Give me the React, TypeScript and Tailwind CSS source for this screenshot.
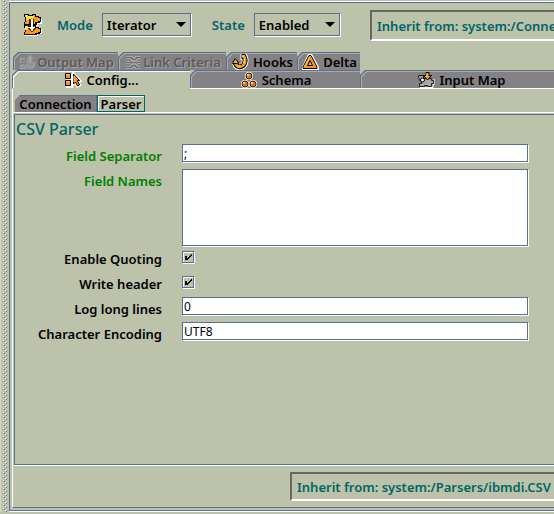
import React, { useState } from 'react';

type IconProps = { className?: string };

function ModeIcon() {
  return (
    <svg width="18" height="22" viewBox="0 0 18 22" shapeRendering="crispEdges" aria-hidden="true">
      <path d="M1 1h11v2h4v2h2v5h-4v2H1zM1 11h11v2h4v2h2v5h-4v2H1z" fill="#fff" />
      <path d="M0 0h5v1h3V0h4v2h3v1h2v5h-1v1h-3v2H0V8h1V3H0z" fill="#000" />
      <path d="M0 11h5v1h3v-1h4v2h3v1h2v5h-1v1h-3v1H0v-3h1v-4H0z" fill="#000" />
      <path d="M1 1h3v1h5V1h2v2h3v1h2v3h-2v1h-3v2H1V8h1V3H1z" fill="#ff9a18" />
      <path d="M1 12h3v1h5v-1h2v2h3v1h2v3h-2v1h-3v1H1v-2h1v-4H1z" fill="#ff9a18" />
      <path d="M1 1h3v1h6v2H7v1H5v1H2V3H1zM1 12h3v1h6v2H3v1H1z" fill="#ffdf4a" />
      <path d="M5 5h5v9h2v1h-1v1h-1v1H9v1H7v-1H6v-1H5v-1H4v-1h1z" fill="#000" opacity=".75" />
      <path d="M7 5h2v8h2v1h-1v1H9v2H8v1-1H7v-2H6v-1H5v-1h2z" fill="#fff" />
    </svg>
  );
}

function OutputIcon({ className }: IconProps) {
  return (
    <svg className={className} width="17" height="16" viewBox="0 0 17 16" aria-hidden="true">
      <path d="M1.500 4.500h4v2h3v3h5v-1h2v4h-2v2h-4v-1h-3v1h-5v-3h2v-3h-2z" fill="#969596" stroke="#a5a4a5" />
      <circle cx="5" cy="8" r="2" fill="none" stroke="#777677" />
      <path d="M11 .5L15 5h-2v5H9V5H7z" fill="#a5a4a5" stroke="#8a898a" />
    </svg>
  );
}

function LinkIcon({ className }: IconProps) {
  return (
    <svg className={className} width="17" height="16" viewBox="0 0 17 16" fill="none" shapeRendering="crispEdges" aria-hidden="true">
      <path d="M1 3h5v1h1v1h3V4h1V3h5M1 8h4M7 8h4M12 8h4M1 13h5v-1h1v-1h3v1h1v1h5" stroke="#a5a4a5" strokeWidth="3" />
      <path d="M1 3h5v1h1v1h3V4h1V3h5M1 8h4M7 8h4M12 8h4M1 13h5v-1h1v-1h3v1h1v1h5" stroke="#6d6c6d" />
    </svg>
  );
}

function HookIcon({ className }: IconProps) {
  return (
    <svg className={className} width="17" height="16" viewBox="0 0 17 16" fill="none" aria-hidden="true">
      <path d="M8.500 3h4q1.500 3 0 7-1.500 3-5 3-4 0-4-5" stroke="#fff" strokeWidth="6.500" />
      <path d="M9.500 2.500h2.500q2 3 .5 7Q11 12.800 7.500 12.800 3.500 12.500 3 7" stroke="#000" strokeWidth="4.800" />
      <path d="M10.500 2.500h1.500q2 3 .5 7Q11 12.800 7.500 12.800 3.700 12.500 3.300 8" stroke="#f2981b" strokeWidth="2.800" />
      <path d="M0.500 9.500L3 4.500l4 4.500-2.500.5z" fill="#f6a92c" stroke="#000" />
      <path d="M10 2.200h2M12.300 4.500q.6 2.500-.7 5M5 12h3" stroke="#ffe58a" strokeWidth="1.200" />
    </svg>
  );
}

function DeltaIcon({ className }: IconProps) {
  return (
    <svg className={className} width="17" height="16" viewBox="0 0 17 16" aria-hidden="true">
      <path d="M6 0h4l7 13v3H0v-3z" fill="#fff" />
      <path d="M7 1.500h2l6 11.500v1.500H1V13z" fill="#f79421" stroke="#000" />
      <path d="M7.500 3L2.500 12.500" stroke="#ffd27a" />
      <path d="M8 6.500l2.500 5h-5z" fill="#b9bda8" stroke="#000" />
    </svg>
  );
}

function ConfigIcon({ className }: IconProps) {
  return (
    <svg className={className} width="17" height="16" viewBox="0 0 17 16" aria-hidden="true">
      <path d="M1 2h7v14H1z" fill="#fff" />
      <path d="M.5 1.500h5v5h-5zM.5 8.500h5v5h-5z" fill="#f79421" stroke="#000" />
      <path d="M1 2.500h3M1 9.500h3" stroke="#ffd27a" />
      <path d="M8.500 2l6 6.500h-2l2 4.500-2 1-2-4-2 2z" fill="#f79421" stroke="#fff" strokeWidth="3" />
      <path d="M8.500 2l6 6.500h-2l2 4.500-2 1-2-4-2 2z" fill="#f79421" stroke="#000" />
      <path d="M9 4v6" stroke="#ffd27a" />
    </svg>
  );
}

function Ball({ cx, cy }: { cx: number; cy: number }) {
  return (
    <g>
      <circle cx={cx} cy={cy} r="4" fill="#fff" />
      <circle cx={cx} cy={cy} r="3" fill="#d9781a" stroke="#3a1c00" />
      <rect x={cx - 2} y={cy - 2} width="2" height="2" fill="#ffc67a" />
    </g>
  );
}

function SchemaIcon({ className }: IconProps) {
  return (
    <svg className={className} width="17" height="16" viewBox="0 0 17 16" aria-hidden="true">
      <Ball cx={8} cy={4} />
      <Ball cx={4} cy={12} />
      <Ball cx={12} cy={12} />
    </svg>
  );
}

function InputIcon({ className }: IconProps) {
  return (
    <svg className={className} width="17" height="16" viewBox="0 0 17 16" aria-hidden="true">
      <path d="M2 15.500h13v-3h1V7" fill="none" stroke="#fff" />
      <path d="M.5 3.500h5v3h8v2h2v3h-2v3h-4v-1h-3v1h-5v-3h2v-3h-2z" fill="#a9a9a3" stroke="#222" />
      <circle cx="4.500" cy="8" r="2" fill="#fff" stroke="#000" />
      <path d="M8 .5h3v3h2.500L9.500 8 5.500 3.500H8z" fill="#f79421" stroke="#000" />
      <path d="M9 1v4" stroke="#ffd24a" />
    </svg>
  );
}

function Tab({
  label,
  icon,
  width,
  selected = false,
  disabled = false,
}: {
  label: string;
  icon: React.ReactNode;
  width: string;
  selected?: boolean;
  disabled?: boolean;
}) {
  const cut = '[clip-path:polygon(5px_0,100%_0,100%_100%,0_100%,0_5px)]';
  return (
    <button
      type="button"
      role="tab"
      aria-selected={selected}
      disabled={disabled}
      className={`h-[18px] bg-[#5b6f93] pt-px pl-px [clip-path:polygon(5px_0,100%_0,100%_100%,0_100%,0_5px)] ${width}`}
    >
      <span className={`block h-full pt-px pl-px ${cut} ${selected ? 'bg-white' : 'bg-[#a8aba0]'}`}>
        <span
          className={`flex h-full items-center justify-center whitespace-nowrap ${cut} ${
            disabled ? 'gap-px text-[#5c5b5c] [text-shadow:1px_1px_0_#a5a4a5]' : 'gap-1 text-black'
          } ${selected ? 'bg-[#bdc2ab]' : 'bg-[#848284]'}`}
        >
          {icon}
          {label}
        </span>
      </span>
    </button>
  );
}

function Combo({ id, label, options, width }: { id: string; label: string; options: string[]; width: string }) {
  return (
    <>
      <label htmlFor={id} className="text-[#006666]">
        {label}
      </label>
      <span className={`relative block ${width}`}>
        <select
          id={id}
          className="h-[23px] w-full appearance-none border border-[#5b6f93] bg-[#bdc2ab] pl-1 text-black shadow-[1px_1px_0_#fff] outline-none"
        >
          {options.map((o) => (
            <option key={o}>{o}</option>
          ))}
        </select>
        <svg className="pointer-events-none absolute top-[9px] right-[5px]" width="10" height="5" viewBox="0 0 10 5" aria-hidden="true">
          <path d="M0 0h10L5 5z" fill="#000" />
        </svg>
      </span>
    </>
  );
}

function InheritButton({ text, className }: { text: string; className: string }) {
  return (
    <button
      type="button"
      className={`border-t-2 border-b-2 border-l-2 border-t-[#66695c] border-b-white border-l-[#66695c] pl-[5px] text-left whitespace-nowrap text-[#006666] ${className}`}
    >
      {text}
    </button>
  );
}

const field =
  'block w-full border border-[#5b6f93] bg-white px-px text-[12px] leading-4 font-normal text-black shadow-[1px_1px_0_#fff] outline-none';

function Row({ id, label, green = false, children }: { id: string; label: string; green?: boolean; children: React.ReactNode }) {
  return (
    <div className="flex gap-5">
      <label htmlFor={id} className={`w-[147px] shrink-0 text-right leading-6 ${green ? 'text-[#008000]' : 'text-black'}`}>
        {label}
      </label>
      <div className="min-w-0 flex-1">{children}</div>
    </div>
  );
}

function Check({ id }: { id: string }) {
  const [on, setOn] = useState(true);
  return (
    <div className="h-[25px] pt-1">
      <span className="relative block size-3">
        <input
          id={id}
          type="checkbox"
          checked={on}
          onChange={(e) => setOn(e.target.checked)}
          className="block size-3 appearance-none border border-[#5b6f93] shadow-[1px_1px_0_#fff,inset_1px_1px_0_#fff]"
        />
        {on && (
          <svg className="pointer-events-none absolute inset-0" width="12" height="12" viewBox="0 0 12 12" aria-hidden="true">
            <path d="M3 5h2v2h1V6h1V5h1V4h1V3h1v2H9v1H8v1H7v1H6v1H3z" fill="#000" />
          </svg>
        )}
      </span>
    </div>
  );
}

export default function App() {
  return (
    <div className="flex min-h-screen overflow-hidden bg-[#bdc2ab] pb-[2px] font-['Noto_Sans',sans-serif] text-[13px] leading-4 font-semibold">
      <div className="flex w-[9px] shrink-0 border-l border-[#d5d8c8] pl-[2px]">
        <svg className="h-auto w-1 self-stretch" shapeRendering="crispEdges" aria-hidden="true">
          <defs>
            <pattern id="bumps" width="4" height="4" patternUnits="userSpaceOnUse">
              <path d="M0 0h1v1H0zM2 2h1v1H2z" fill="#fff" />
              <path d="M1 1h1v1H1zM3 3h1v1H3z" fill="#5b6f93" />
            </pattern>
          </defs>
          <rect width="4" height="100%" fill="url(#bumps)" />
        </svg>
      </div>

      <main className="flex min-w-0 flex-1 flex-col pt-px">
        <div className="flex flex-1 flex-col border-t border-b border-white">
          <div className="flex flex-1 flex-col border-t border-b border-l border-[#5b6f93] pb-[2px]">
            <header className="flex items-start pl-[14px]">
              <div className="pt-[11px]">
                <ModeIcon />
              </div>
              <div className="flex flex-1 items-center gap-[9px] pt-[10px] pl-[15px]">
                <Combo id="mode" label="Mode" options={['Iterator', 'Lookup', 'AddOnly', 'Update', 'Delete']} width="w-[89px]" />
                <span className="w-[3px]" />
                <Combo id="state" label="State" options={['Enabled', 'Disabled', 'Passive']} width="w-[86px]" />
              </div>
              <div className="pt-[7px]">
                <InheritButton text="Inherit from: system:/Conne" className="block h-[31px] w-[184px]" />
              </div>
            </header>

            <div role="tablist" className="mt-[11px] flex pl-[3px]">
              <Tab label="Output Map" icon={<OutputIcon />} width="w-[105px]" disabled />
              <Tab label="Link Criteria" icon={<LinkIcon />} width="w-[108px]" disabled />
              <Tab label="Hooks" icon={<HookIcon />} width="w-[71px]" />
              <Tab label="Delta" icon={<DeltaIcon />} width="w-[63px]" />
            </div>

            <div role="tablist" className="flex pl-[2px]">
              <Tab label="Config..." icon={<ConfigIcon />} width="w-[178px] shrink-0" selected />
              <div className="flex min-w-0 flex-1 border-b border-white">
                <Tab label="Schema" icon={<SchemaIcon />} width="w-[170px] shrink-0" />
                <Tab label="Input Map" icon={<InputIcon />} width="-mr-2 min-w-0 flex-1" />
              </div>
            </div>

            <section className="ml-[2px] flex flex-1 flex-col border-b border-l border-b-[#5b6f93] border-l-white pt-[6px]">
              <div role="tablist" className="flex h-[17px] pl-[2px]">
                <button
                  type="button"
                  role="tab"
                  aria-selected={false}
                  className="w-[82px] border-t border-r border-[#5b6f93] bg-[#848284] text-black [clip-path:polygon(5px_0,100%_0,100%_100%,0_100%,0_5px)]"
                >
                  Connection
                </button>
                <button
                  type="button"
                  role="tab"
                  aria-selected={true}
                  className="w-[48px] border border-[#006666] text-black shadow-[inset_1px_1px_0_#fff]"
                >
                  Parser
                </button>
              </div>

              <div className="flex flex-1 flex-col border-t border-white pt-px">
                <form className="ml-px flex-1 border border-r-0 border-[#5b6f93] pr-[26px] shadow-[0_1px_0_#fff]" onSubmit={(e) => e.preventDefault()}>
                  <h2 className="pt-1 pl-px text-[16px] leading-5 font-medium text-[#006666]">CSV Parser</h2>
                  <div className="pt-[5px]">
                    <Row id="sep" label="Field Separator" green>
                      <div className="h-[25px]">
                        <input id="sep" defaultValue=";" className={`h-[18px] ${field}`} />
                      </div>
                    </Row>
                    <Row id="names" label="Field Names" green>
                      <div className="h-[78px]">
                        <textarea id="names" className={`h-[77px] resize-none ${field}`} />
                      </div>
                    </Row>
                    <Row id="quoting" label="Enable Quoting">
                      <Check id="quoting" />
                    </Row>
                    <Row id="header" label="Write header">
                      <Check id="header" />
                    </Row>
                    <Row id="log" label="Log long lines">
                      <div className="h-[25px]">
                        <input id="log" defaultValue="0" className={`h-[18px] ${field}`} />
                      </div>
                    </Row>
                    <Row id="enc" label="Character Encoding">
                      <div className="h-[25px]">
                        <input id="enc" defaultValue="UTF8" className={`h-[18px] ${field}`} />
                      </div>
                    </Row>
                  </div>
                </form>
                <footer className="flex justify-end pt-[7px] pb-[6px]">
                  <InheritButton text="Inherit from: system:/Parsers/ibmdi.CSV" className="h-[29px] w-[264px]" />
                </footer>
              </div>
            </section>
          </div>
        </div>
      </main>
    </div>
  );
}
